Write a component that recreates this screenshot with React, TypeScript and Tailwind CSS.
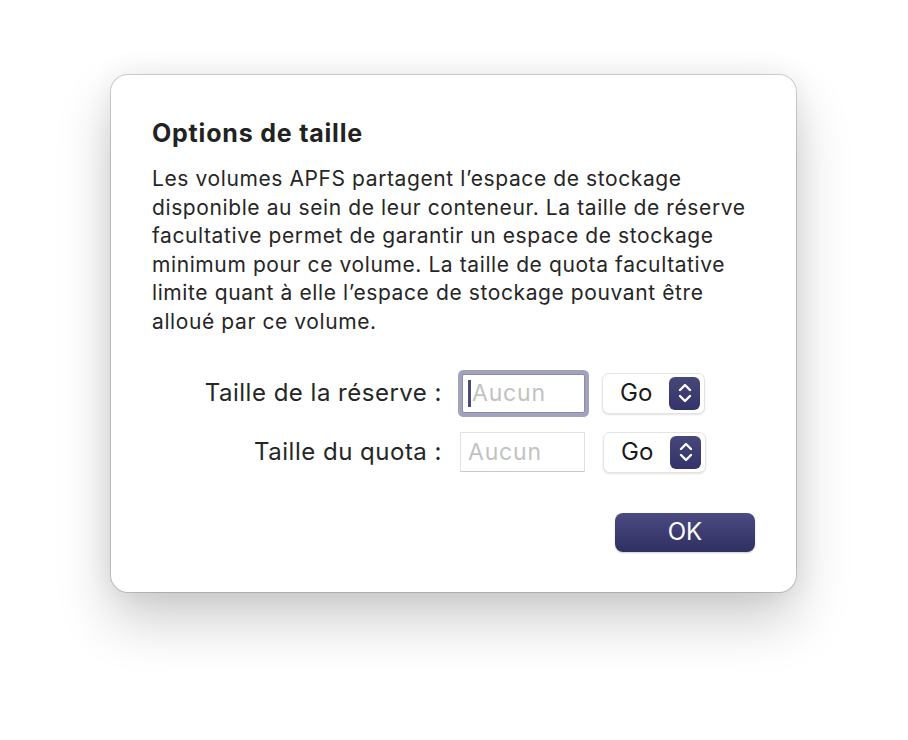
export default function App() {
  const font = { fontFamily: 'Inter, "Noto Sans", "Liberation Sans", sans-serif' }

  const rows = [
    { label: "Taille de la réserve :", focused: true },
    { label: "Taille du quota :", focused: false },
  ]

  const lines = [
    "Les volumes APFS partagent l’espace de stockage",
    "disponible au sein de leur conteneur. La taille de réserve",
    "facultative permet de garantir un espace de stockage",
    "minimum pour ce volume. La taille de quota facultative",
    "limite quant à elle l’espace de stockage pouvant être",
    "alloué par ce volume.",
  ]

  return (
    <div className="w-[908px] h-[740px] bg-white pt-[75px] pl-[111px]" style={font}>
      <div className="w-[685px] h-[517px] rounded-[17px] bg-white px-[41px] pt-[41px] shadow-[0_0_0_1px_rgba(0,0,0,0.16),0_28px_55px_rgba(0,0,0,0.2),0_0_28px_rgba(0,0,0,0.07)]">
        <h1 className="text-[25px] leading-[34px] font-bold text-[#222] tracking-[0.8px]">Options de taille</h1>
        <p className="mt-[15px] text-[21px] leading-[28.6px] text-[#262626] tracking-[0.6px] whitespace-nowrap">
          {lines.map((l, i) => (
            <span key={i} className="block">{l}</span>
          ))}
        </p>

        <div className="mt-[36px] flex flex-col gap-[18px]">
          {rows.map((row) => (
            <div key={row.label} className="flex items-center">
              <div className="w-[290px] text-right text-[24px] tracking-[0.5px] text-[#262626] whitespace-nowrap">{row.label}</div>
              <div
                className={
                  row.focused
                    ? "ml-[20px] w-[123px] h-[39px] bg-white border border-[#8a8aaa] rounded-[2px] shadow-[0_0_0_4px_#a2a2bd] flex items-center pl-[5px]"
                    : "ml-[18px] w-[125px] h-[40px] bg-white border border-[#e2e2e2] border-b-[#c8c8c8] flex items-center pl-[7px]"
                }
              >
                {row.focused && <span className="w-[3px] h-[27px] bg-[#4a4a7c] mr-[1px]"></span>}
                <span className="text-[23px] tracking-[0.8px] text-[#c2c2c2]">Aucun</span>
              </div>
              <div className={(row.focused ? "ml-[17px]" : "ml-[18px]") + " w-[103px] h-[41px] rounded-[7px] bg-white border border-[#e4e4e4] shadow-[0_1px_2px_rgba(0,0,0,0.12)] flex items-center justify-between pl-[17px] pr-[4px]"}>
                <span className="text-[24px] text-[#1a1a1a]">Go</span>
                <div className="w-[31px] h-[33px] rounded-[6px] bg-gradient-to-b from-[#474779] to-[#33336a] flex items-center justify-center">
                  <svg width="16" height="24" viewBox="0 0 16 24" fill="none" stroke="white" strokeWidth="2.4" strokeLinecap="round" strokeLinejoin="round">
                    <path d="M3 9 L8 4 L13 9" />
                    <path d="M3 15 L8 20 L13 15" />
                  </svg>
                </div>
              </div>
            </div>
          ))}
        </div>

        <div className="mt-[40px] flex justify-end">
          <button className="w-[140px] h-[39px] rounded-[8px] bg-gradient-to-b from-[#4b4b82] to-[#2f2f62] text-white text-[24px] shadow-[0_1px_2px_rgba(0,0,0,0.2)]">
            OK
          </button>
        </div>
      </div>
    </div>
  )
}
